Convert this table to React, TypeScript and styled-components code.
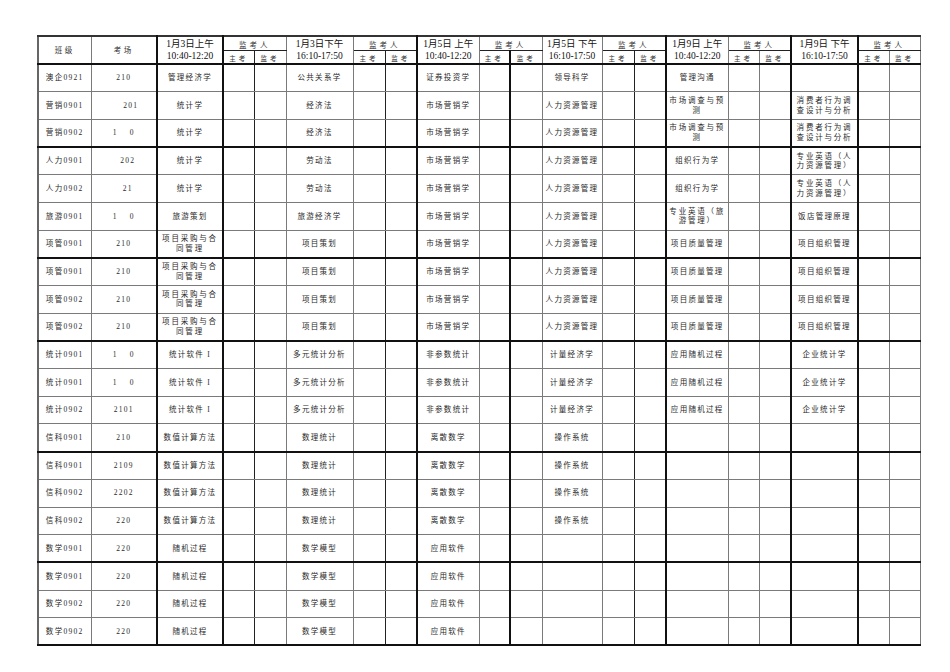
import React from 'react';
import styled, { createGlobalStyle } from 'styled-components';

type Line = 'thin' | 'dark' | 'thick';

const line = (l: Line) =>
  l === 'thick' ? '2px solid #111' : l === 'dark' ? '1px solid #222' : '1px solid #7a7a7a';

const GlobalStyle = createGlobalStyle`
  body {
    margin: 0;
    background: #fff;
  }
`;

const Page = styled.div`
  padding: 35px 0 0 37px;
  width: 950px;
  height: 672px;
  box-sizing: border-box;
  overflow: hidden;
`;

const Sheet = styled.table`
  border-collapse: collapse;
  table-layout: fixed;
  width: 882px;
  border-top: 2px solid #333;
  border-left: 2px solid #666;
  font-family: 'Liberation Serif', 'Noto Sans CJK SC', serif;
  color: #2a2a2a;
`;

const HeadRow = styled.tr`
  height: 14px;
`;

const BodyRow = styled.tr`
  height: 27.7px;
`;

const HeadCell = styled.th<{ $right: Line; $bottom?: Line; $align?: 'middle' | 'bottom' }>`
  padding: 0;
  font-weight: normal;
  text-align: center;
  vertical-align: ${(p) => p.$align ?? 'middle'};
  border-right: ${(p) => line(p.$right)};
  border-bottom: ${(p) => line(p.$bottom ?? 'thick')};
  overflow: hidden;
  white-space: nowrap;
`;

const Label = styled.span<{ $size?: number; $spacing?: number }>`
  display: block;
  font-family: 'Noto Sans CJK SC', sans-serif;
  font-size: ${(p) => p.$size ?? 7.5}px;
  letter-spacing: ${(p) => p.$spacing ?? 2.5}px;
  line-height: 10px;
  color: #333;
`;

const DayTitle = styled.span`
  display: block;
  font-size: 9.5px;
  line-height: 12px;
  color: #111;
`;

const Cell = styled.td<{ $right: Line; $bottom: Line; $wide?: boolean; $nudge?: number }>`
  padding: 0 0 0 ${(p) => p.$nudge ?? 0}px;
  text-align: center;
  vertical-align: middle;
  border-right: ${(p) => line(p.$right)};
  border-bottom: ${(p) => line(p.$bottom)};
  font-size: 7.5px;
  line-height: 9.5px;
  letter-spacing: ${(p) => (p.$wide ? 1.8 : 1.3)}px;
  white-space: pre;
  overflow: hidden;
`;

const widths = [53, 66, 66, 31, 32, 67, 32, 32, 62, 31, 32, 60, 32, 32, 62, 31, 32, 67, 31, 31];

const colRight: Line[] = [
  'thin', 'thick', 'thick', 'dark', 'thin',
  'thin', 'dark', 'thick',
  'thin', 'thick', 'thin',
  'thin', 'dark', 'thick',
  'thin', 'thin', 'thick',
  'thick', 'thin', 'thin',
];

const days = [
  ['1月3日上午', '10:40-12:20'],
  ['1月3日下午', '16:10-17:50'],
  ['1月5日 上午', '10:40-12:20'],
  ['1月5日 下午', '16:10-17:50'],
  ['1月9日 上午', '10:40-12:20'],
  ['1月9日 下午', '16:10-17:50'],
];

type Row = { cls: string; room: string; nudge?: number; exams: string[] };

const project = ['项目采购与合/同管理', '项目策划', '市场营销学', '人力资源管理', '项目质量管理', '项目组织管理'];
const stats = ['统计软件 I', '多元统计分析', '非参数统计', '计量经济学', '应用随机过程', '企业统计学'];
const info = ['数值计算方法', '数理统计', '离散数学', '操作系统', '', ''];
const maths = ['随机过程', '数学模型', '应用软件', '', '', ''];

const rows: Row[] = [
  { cls: '澳企0921', room: '210', exams: ['管理经济学', '公共关系学', '证券投资学', '领导科学', '管理沟通', ''] },
  { cls: '营销0901', room: '201', nudge: 14, exams: ['统计学', '经济法', '市场营销学', '人力资源管理', '市场调查与预/测', '消费者行为调/查设计与分析'] },
  { cls: '营销0902', room: '1\u2003 0', exams: ['统计学', '经济法', '市场营销学', '人力资源管理', '市场调查与预/测', '消费者行为调/查设计与分析'] },
  { cls: '人力0901', room: '202', nudge: 8, exams: ['统计学', '劳动法', '市场营销学', '人力资源管理', '组织行为学', '专业英语（人/力资源管理）'] },
  { cls: '人力0902', room: '21', nudge: 8, exams: ['统计学', '劳动法', '市场营销学', '人力资源管理', '组织行为学', '专业英语（人/力资源管理）'] },
  { cls: '旅游0901', room: '1\u2003 0', exams: ['旅游策划', '旅游经济学', '市场营销学', '人力资源管理', '专业英语（旅/游管理）', '饭店管理原理'] },
  { cls: '项管0901', room: '210', exams: project },
  { cls: '项管0901', room: '210', exams: project },
  { cls: '项管0902', room: '210', exams: project },
  { cls: '项管0902', room: '210', exams: project },
  { cls: '统计0901', room: '1\u2003 0', exams: stats },
  { cls: '统计0901', room: '1\u2003 0', exams: stats },
  { cls: '统计0902', room: '2101', exams: stats },
  { cls: '信科0901', room: '210', exams: info },
  { cls: '信科0901', room: '2109', exams: info },
  { cls: '信科0902', room: '2202', exams: info },
  { cls: '信科0902', room: '220', exams: info },
  { cls: '数学0901', room: '220', exams: maths },
  { cls: '数学0901', room: '220', exams: maths },
  { cls: '数学0902', room: '220', exams: maths },
  { cls: '数学0902', room: '220', exams: maths },
];

const heavyAfter = new Set([2, 6, 9, 13, 17, 20]);

const Multi = ({ text }: { text: string }) => {
  const parts = text.split('/');
  return (
    <>
      {parts.map((p, i) => (
        <React.Fragment key={i}>
          {i > 0 && <br />}
          {p}
        </React.Fragment>
      ))}
    </>
  );
};

const Header = () => (
  <thead>
    <HeadRow>
      <HeadCell rowSpan={2} $right={colRight[0]}>
        <Label>班级</Label>
      </HeadCell>
      <HeadCell rowSpan={2} $right={colRight[1]}>
        <Label>考场</Label>
      </HeadCell>
      {days.map((d, i) => {
        const c = 2 + i * 3;
        return (
          <React.Fragment key={i}>
            <HeadCell rowSpan={2} $right={colRight[c]}>
              <DayTitle>{d[0]}</DayTitle>
              <DayTitle>{d[1]}</DayTitle>
            </HeadCell>
            <HeadCell colSpan={2} $right={colRight[c + 2]} $bottom="dark" $align="bottom">
              <Label $spacing={3}>监考人</Label>
            </HeadCell>
          </React.Fragment>
        );
      })}
    </HeadRow>
    <HeadRow>
      {days.map((_, i) => {
        const c = 2 + i * 3;
        return (
          <React.Fragment key={i}>
            <HeadCell $right={colRight[c + 1]} $align="bottom">
              <Label $size={6.5} $spacing={3}>主考</Label>
            </HeadCell>
            <HeadCell $right={colRight[c + 2]} $align="bottom">
              <Label $size={6.5} $spacing={3}>监考</Label>
            </HeadCell>
          </React.Fragment>
        );
      })}
    </HeadRow>
  </thead>
);

export default function App() {
  return (
    <Page>
      <GlobalStyle />
      <Sheet>
        <colgroup>
          {widths.map((w, i) => (
            <col key={i} style={{ width: w }} />
          ))}
        </colgroup>
        <Header />
        <tbody>
          {rows.map((r, ri) => {
            const bottom: Line = heavyAfter.has(ri) ? 'thick' : 'thin';
            const cells: { text: string; nudge?: number }[] = [
              { text: r.cls },
              { text: r.room, nudge: r.nudge },
            ];
            r.exams.forEach((e) => {
              cells.push({ text: e }, { text: '' }, { text: '' });
            });
            return (
              <BodyRow key={ri}>
                {cells.map((c, ci) => (
                  <Cell
                    key={ci}
                    $right={colRight[ci]}
                    $bottom={bottom}
                    $wide={c.text.includes('/')}
                    $nudge={c.nudge}
                  >
                    <Multi text={c.text} />
                  </Cell>
                ))}
              </BodyRow>
            );
          })}
        </tbody>
      </Sheet>
    </Page>
  );
}
